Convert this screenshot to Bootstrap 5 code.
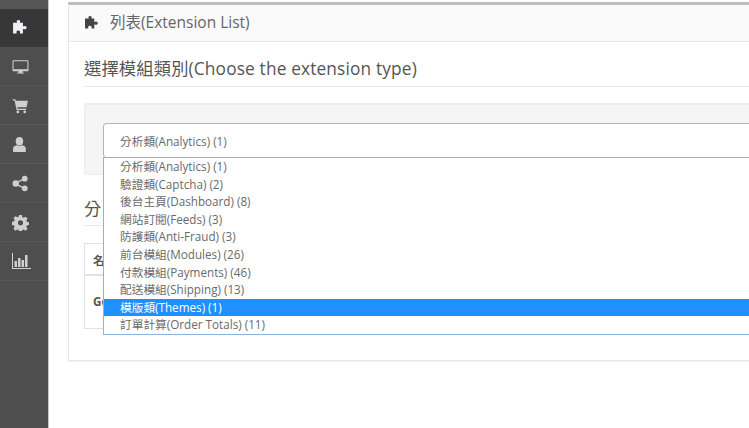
<!DOCTYPE html>
<html lang="zh-Hant">
<head>
<meta charset="utf-8">
<title>Extension List</title>
<link href="https://cdn.jsdelivr.net/npm/bootstrap@5.3.0/dist/css/bootstrap.min.css" rel="stylesheet">
<style>
html,body{height:428px;overflow:hidden;background:#fff}
body{font-family:"Open Sans","Noto Sans CJK TC",sans-serif;color:#6a6a6a;font-size:11.7px}
.shell{height:428px;width:900px}
.side{width:49px;flex:none;background:#4e4e4e;border-right:1px solid #c8c8c8}
.side-top{background:#565656;height:9px}
.side-item{height:39px;display:flex;align-items:center;padding-left:12px;border-bottom:1px solid #585858}
.side-item.on{height:38px;background:#373737;border-bottom-color:#3c3c3c}
.side-item svg{width:17px;height:17px;fill:#cfcfcf}
.side-item.on svg{fill:#eef0f6}
.side-item svg.wide{width:19px;height:18px}
.content{width:851px;padding:2px 0 0 19px}
.pane{width:832px;height:359px;border:1px solid #e6e6e6;border-top:3px solid #bdbdbd;box-shadow:0 1px 2px rgba(0,0,0,.06)}
.pane-head{height:37px;background:#fafafa;border-bottom:1px solid #e8e8e8;padding-left:15px;font-size:15.5px;color:#666;gap:10px}
.pane-head svg{width:16px;height:16px;fill:#444}
.pane-body{padding:15px 15px 0;position:relative}
.sec-title{font-size:17.3px;line-height:24px;color:#555;margin:0;padding-bottom:5px;border-bottom:1px solid #e8e8e8;font-weight:400;letter-spacing:.15px}
.panel-well{margin-top:16px;height:72px;background:#f5f5f5;border:1px solid #ececec;border-radius:3px;padding-top:19px;padding-left:18px;box-shadow:inset 0 1px 1px rgba(0,0,0,.04)}
.pick{height:35px;width:700px;background:#fff;border:1px solid #b4b4b4;border-bottom-color:#ccc;border-radius:4px 0 0 4px;padding-left:16px;line-height:34px}
.pick-list{position:absolute;left:34px;top:115px;width:700px;height:178px;background:#fff;border:1px solid #8fb0e0;z-index:5;padding:0}
.pick-opt{height:17.6px;line-height:17.6px;padding-left:16px;white-space:nowrap}
.pick-opt.sel{background:#1e90ff;color:#fff}
.second{margin-top:22px}
.second .sec-title{padding-bottom:4px}
.mod-table{margin-top:17px;width:780px;border:1px solid #e2e2e2;height:86px}
.mod-table .r1{height:32px;border-bottom:2px solid #e2e2e2;padding:0 8px;font-weight:700;color:#555;line-height:32px}
.mod-table .r2{height:51px;padding:0 8px;font-weight:700;color:#555;line-height:51px}
</style>
</head>
<body>
<div class="shell d-flex">
  <nav class="side">
    <div class="side-top"></div>
    <div class="side-item on"><svg viewBox="0 0 16 16"><path d="M5.200 1.200c1.400-.6 2.800.2 2.400 1.500l-.3.900h3v3.400l.9-.3c1.500-.5 2.900.5 2.500 1.800-.3 1.200-1.700 1.500-2.700 1l-.7-.3v4.400H7.300l.3-.9c.4-1.100-.6-1.900-1.700-1.900s-2.100.8-1.700 1.900l.3.900H1V3.600h3.800l-.3-.8c-.2-.6 0-1.300.7-1.600z"/></svg></div>
    <div class="side-item"><svg viewBox="0 0 16 16"><path fill-rule="evenodd" d="M1.500 2h13c.6 0 1 .4 1 1v8.500c0 .6-.4 1-1 1H10v1.300h1.500v.9h-7v-.9H6v-1.300H1.500c-.6 0-1-.4-1-1V3c0-.6.4-1 1-1zm0 1.100v7.400h13V3.100z"/></svg></div>
    <div class="side-item"><svg viewBox="0 0 16 16"><path d="M.7 2h2.500l.4 1.500H15l-1.300 6.200H5l.3 1.300h8v1.200H4.300L2.400 3.200H.7z"/><circle cx="5.500" cy="14" r="1.300"/><circle cx="12" cy="14" r="1.300"/></svg></div>
    <div class="side-item"><svg viewBox="0 0 16 16"><ellipse cx="7" cy="5" rx="3.500" ry="4"/><path d="M1 15v-3c0-2 1.500-3 3.500-3.300 1.500 1 3.500 1 5 0 2 .3 3.500 1.300 3.500 3.300v3z"/></svg></div>
    <div class="side-item"><svg viewBox="0 0 16 16"><circle cx="3.500" cy="8" r="3"/><circle cx="12" cy="3.500" r="2.700"/><circle cx="12" cy="12.500" r="2.700"/><path d="M3 7l9-4.500.6 1.200-9 4.500zM3.600 7.700l9 4.500-.6 1.200-9-4.500z"/></svg></div>
    <div class="side-item"><svg viewBox="0 0 16 16"><path fill-rule="evenodd" d="M6.700 1h2.600l.4 2 1.300.6 1.800-1.100 1.800 1.800-1.100 1.800.6 1.300 1.900.4v2.600l-2 .4-.5 1.300 1.100 1.800-1.800 1.800-1.800-1.100-1.300.5-.4 2H6.700l-.4-2-1.300-.5-1.800 1.100-1.800-1.800 1.100-1.800-.6-1.300-1.900-.4V7.300l2-.4.500-1.300-1.100-1.800 1.800-1.800 1.800 1.100 1.300-.6zM8 5.800a2.400 2.400 0 1 0 0 4.800 2.400 2.400 0 0 0 0-4.800z"/></svg></div>
    <div class="side-item"><svg class="wide" viewBox="0 0 19 18"><path d="M0 1h1v15h18v1H0z"/><path d="M2.500 9h2.500v6H2.500zM6 6h2.500v9H6zM9.500 8H12v7H9.500zM13 3h2.500v12H13z"/></svg></div>
  </nav>
  <main class="content">
    <section class="pane">
      <header class="pane-head d-flex align-items-center">
        <svg viewBox="0 0 16 16"><path d="M5.200 1.200c1.400-.6 2.800.2 2.400 1.500l-.3.900h3v3.400l.9-.3c1.500-.5 2.900.5 2.500 1.800-.3 1.200-1.700 1.500-2.700 1l-.7-.3v4.400H7.300l.3-.9c.4-1.100-.6-1.900-1.700-1.900s-2.100.8-1.700 1.900l.3.900H1V3.600h3.800l-.3-.8c-.2-.6 0-1.300.7-1.600z"/></svg>
        <span>列表(Extension List)</span>
      </header>
      <div class="pane-body">
        <h2 class="sec-title">選擇模組類別(Choose the extension type)</h2>
        <div class="panel-well"><div class="pick">分析類(Analytics) (1)</div></div>
        <div class="pick-list">
          <div class="pick-opt">分析類(Analytics) (1)</div>
          <div class="pick-opt">驗證類(Captcha) (2)</div>
          <div class="pick-opt">後台主頁(Dashboard) (8)</div>
          <div class="pick-opt">網站訂閱(Feeds) (3)</div>
          <div class="pick-opt">防護類(Anti-Fraud) (3)</div>
          <div class="pick-opt">前台模組(Modules) (26)</div>
          <div class="pick-opt">付款模組(Payments) (46)</div>
          <div class="pick-opt">配送模組(Shipping) (13)</div>
          <div class="pick-opt sel">模版類(Themes) (1)</div>
          <div class="pick-opt">訂單計算(Order Totals) (11)</div>
        </div>
        <div class="second">
          <h2 class="sec-title">分</h2>
          <div class="mod-table">
            <div class="r1">名</div>
            <div class="r2">Ge</div>
          </div>
        </div>
      </div>
    </section>
  </main>
</div>
<script src="https://cdn.jsdelivr.net/npm/bootstrap@5.3.0/dist/js/bootstrap.bundle.min.js"></script>
</body>
</html>
